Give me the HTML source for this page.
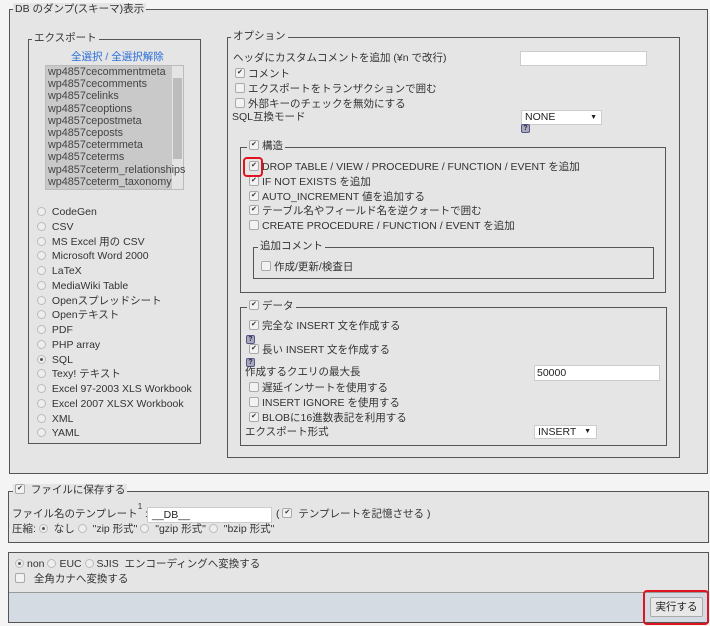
<!DOCTYPE html>
<html><head><meta charset="utf-8">
<style>
*{box-sizing:border-box;margin:0;padding:0}
body{width:710px;height:626px;background:#f4f4f4;font-family:"Liberation Sans","Noto Sans CJK JP",sans-serif;font-size:10.5px;color:#333;position:relative;overflow:hidden}
.a{position:absolute;white-space:nowrap;line-height:13px}
.box{position:absolute;border:1px solid #555;background:#e5e5e5}
.in{position:absolute;border:1px solid #555;}
.lg{position:absolute;background:#e5e5e5;padding:0 2px;line-height:13px;white-space:nowrap}
.cb{display:inline-block;width:10px;height:10px;border:1px solid #aaa;border-radius:2px;background:#f2f2f2;vertical-align:-1px;margin-right:3px;position:relative;font-size:8px;line-height:8px;text-align:center;color:#333}
.cb.on::after{content:"✔";position:absolute;left:1px;top:0;font-size:7px}
.rd{display:inline-block;width:9px;height:9px;border:1px solid #bbb;border-radius:50%;background:#eee;vertical-align:-1px;margin-right:3px;position:relative}
.rd.on::after{content:"";position:absolute;left:2px;top:2px;width:3px;height:3px;border-radius:50%;background:#555}
.inp{position:absolute;background:#fff;border:1px solid #ccc}
.help{position:absolute;width:9px;height:9px;border:1px solid #558;border-radius:2px;background:#aab;font-size:7px;line-height:7px;text-align:center;color:#224;font-weight:bold}
sup{font-size:8px;line-height:0;position:relative;top:-1px;vertical-align:top}
</style></head><body>
<div class="box" style="left:9px;top:9px;width:699px;height:465px"></div>
<div class="lg" style="left:13px;top:3px">DB のダンプ(スキーマ)表示</div>

<div class="in" style="left:28px;top:39px;width:173px;height:405px"></div>
<div class="lg" style="left:32px;top:32px">エクスポート</div>
<div class="a" style="left:71px;top:51px;color:#2b6fd8">全選択 / 全選択解除</div>
<div style="position:absolute;left:45px;top:65px;width:139px;height:125px;background:#c9c9c9;border:1px solid #bbb"></div>
<div style="position:absolute;left:172px;top:66px;width:11px;height:123px;background:#e4e4e4"></div>
<div style="position:absolute;left:173px;top:78px;width:9px;height:81px;background:#bcbcbc"></div>
<div class="a" style="left:48px;top:66px;line-height:12.2px;font-size:10.8px;color:#444">wp4857cecommentmeta<br>wp4857cecomments<br>wp4857celinks<br>wp4857ceoptions<br>wp4857cepostmeta<br>wp4857ceposts<br>wp4857cetermmeta<br>wp4857ceterms<br>wp4857ceterm_relationships<br>wp4857ceterm_taxonomy</div>
<div class="a" style="left:37px;top:205px;line-height:14.75px">
<span class="rd"></span> CodeGen<br><span class="rd"></span> CSV<br><span class="rd"></span> MS Excel 用の CSV<br><span class="rd"></span> Microsoft Word 2000<br><span class="rd"></span> LaTeX<br><span class="rd"></span> MediaWiki Table<br><span class="rd"></span> Openスプレッドシート<br><span class="rd"></span> Openテキスト<br><span class="rd"></span> PDF<br><span class="rd"></span> PHP array<br><span class="rd on"></span> SQL<br><span class="rd"></span> Texy! テキスト<br><span class="rd"></span> Excel 97-2003 XLS Workbook<br><span class="rd"></span> Excel 2007 XLSX Workbook<br><span class="rd"></span> XML<br><span class="rd"></span> YAML</div>

<div class="in" style="left:227px;top:37px;width:453px;height:421px"></div>
<div class="lg" style="left:231px;top:30px">オプション</div>
<div class="a" style="left:233px;top:52px">ヘッダにカスタムコメントを追加 (¥n で改行)</div>
<div class="inp" style="left:520px;top:51px;width:127px;height:15px"></div>
<div class="a" style="left:235px;top:67px;line-height:15px"><span class="cb on"></span>コメント<br><span class="cb"></span>エクスポートをトランザクションで囲む<br><span class="cb"></span>外部キーのチェックを無効にする</div>
<div class="a" style="left:232px;top:111px">SQL互換モード</div>
<div class="inp" style="left:521px;top:110px;width:81px;height:15px;padding-left:3px;line-height:13px;color:#222">NONE<span style="position:absolute;right:4px;font-size:7px">▼</span></div>
<div class="help" style="left:521px;top:124px">?</div>

<div class="in" style="left:240px;top:147px;width:426px;height:146px"></div>
<div class="lg" style="left:247px;top:140px"><span class="cb on"></span>構造</div>
<div class="a" style="left:249px;top:160px;line-height:14.8px"><span class="cb on"></span>DROP TABLE / VIEW / PROCEDURE / FUNCTION / EVENT を追加<br><span class="cb on"></span>IF NOT EXISTS を追加<br><span class="cb on"></span>AUTO_INCREMENT 値を追加する<br><span class="cb on"></span>テーブル名やフィールド名を逆クォートで囲む<br><span class="cb"></span>CREATE PROCEDURE / FUNCTION / EVENT を追加</div>
<div style="position:absolute;left:243px;top:157px;width:20px;height:20px;border:2px solid #e0141e;border-radius:4px"></div>
<div class="in" style="left:253px;top:247px;width:401px;height:32px"></div>
<div class="lg" style="left:258px;top:240px">追加コメント</div>
<div class="a" style="left:261px;top:261px"><span class="cb"></span>作成/更新/検査日</div>

<div class="in" style="left:240px;top:307px;width:427px;height:139px"></div>
<div class="lg" style="left:247px;top:300px"><span class="cb on"></span>データ</div>
<div class="a" style="left:249px;top:320px"><span class="cb on"></span>完全な INSERT 文を作成する</div>
<div class="help" style="left:246px;top:335px">?</div>
<div class="a" style="left:249px;top:344px"><span class="cb on"></span>長い INSERT 文を作成する</div>
<div class="help" style="left:246px;top:358px">?</div>
<div class="a" style="left:245px;top:366px">作成するクエリの最大長</div>
<div class="inp" style="left:534px;top:365px;width:126px;height:16px;padding-left:2px;line-height:14px;color:#222">50000</div>
<div class="a" style="left:249px;top:381px;line-height:15px"><span class="cb"></span>遅延インサートを使用する<br><span class="cb"></span>INSERT IGNORE を使用する<br><span class="cb on"></span>BLOBに16進数表記を利用する</div>
<div class="a" style="left:245px;top:426px">エクスポート形式</div>
<div class="inp" style="left:534px;top:425px;width:63px;height:14px;padding-left:3px;line-height:12px;color:#222">INSERT<span style="position:absolute;right:5px;font-size:7px">▼</span></div>

<div class="box" style="left:8px;top:491px;width:701px;height:52px"></div>
<div class="lg" style="left:13px;top:484px;background:#e5e5e5"><span class="cb on"></span> ファイルに保存する</div>
<div class="a" style="left:12px;top:508px">ファイル名のテンプレート<sup>1</sup> :</div>
<div class="inp" style="left:147px;top:507px;width:125px;height:16px;padding-left:4px;line-height:14px;color:#222">__DB__</div>
<div class="a" style="left:276px;top:508px">( <span class="cb on"></span> テンプレートを記憶させる )</div>
<div class="a" style="left:12px;top:523px">圧縮: <span class="rd on"></span> なし <span class="rd"></span> "zip 形式" <span class="rd"></span> "gzip 形式" <span class="rd"></span> "bzip 形式"</div>

<div class="box" style="left:8px;top:552px;width:701px;height:71px"></div>
<div class="a" style="left:15px;top:558px"><span class="rd on"></span>non <span class="rd"></span>EUC <span class="rd"></span>SJIS &nbsp;エンコーディングへ変換する</div>
<div class="a" style="left:15px;top:573px"><span class="cb"></span>&nbsp; 全角カナへ変換する</div>
<div style="position:absolute;left:9px;top:592px;width:699px;height:30px;background:#d5dbe2;border-top:1px solid #999"></div>
<div style="position:absolute;left:650px;top:597px;width:53px;height:20px;border:1px solid #aaa;background:#e8e8e8;border-radius:2px;text-align:center;line-height:18px;color:#222">実行する</div>
<div style="position:absolute;left:643px;top:590px;width:66px;height:35px;border:2px solid #e0141e;border-radius:4px"></div>
</body></html>
